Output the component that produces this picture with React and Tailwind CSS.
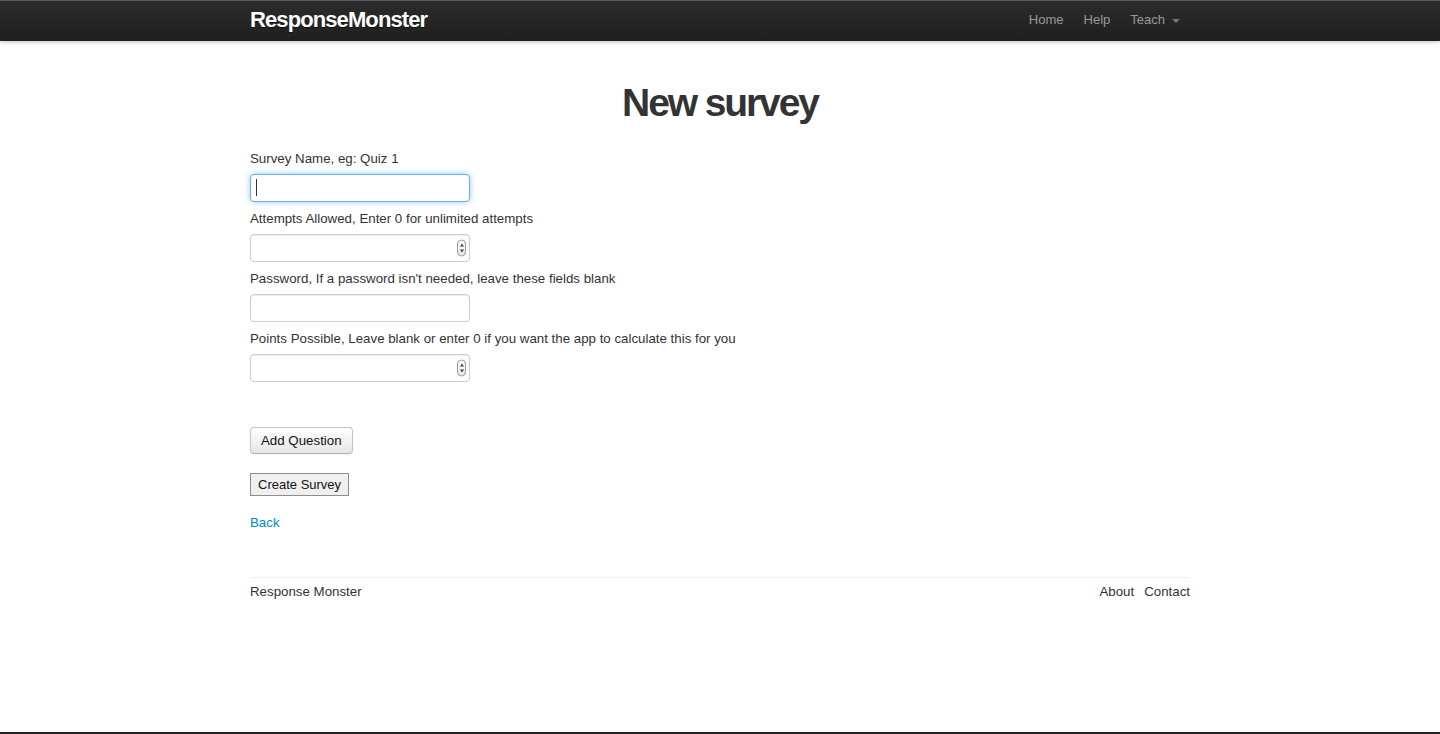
import { useState } from "react";

const font = { fontFamily: '"Liberation Sans", Arial, sans-serif' };

// mac-style spinner shown on number inputs
function Spinner() {
  return (
    <div className="absolute right-[4px] top-1/2 -translate-y-1/2 w-[9px] h-[17px] rounded-[5px] border border-[#9a9a9a] bg-gradient-to-b from-white to-[#e8e8e8] flex flex-col items-center justify-center gap-[3px]">
      <span className="block w-0 h-0 border-l-[2px] border-r-[2px] border-b-[3px] border-l-transparent border-r-transparent border-b-[#444]" />
      <span className="block w-0 h-0 border-l-[2px] border-r-[2px] border-t-[3px] border-l-transparent border-r-transparent border-t-[#444]" />
    </div>
  );
}

function Field({ label, focused, number }) {
  return (
    <div className="flex flex-col">
      <label className="text-[13.3px] leading-[20px] text-[#333] mb-[5px]">{label}</label>
      <div className="relative w-[220px] h-[28px]">
        <input
          type="text"
          className={
            focused
              ? "w-full h-full rounded-[4px] border border-[#66afe9] shadow-[0_0_6px_rgba(82,168,236,0.6)] outline-none px-[6px] text-[14px] bg-white"
              : "w-full h-full rounded-[4px] border border-[#ccc] shadow-[inset_0_1px_1px_rgba(0,0,0,0.075)] outline-none px-[6px] text-[14px] bg-white"
          }
        />
        {focused && <span className="absolute left-[6px] top-[5px] w-px h-[17px] bg-[#333]" />}
        {number && <Spinner />}
      </div>
    </div>
  );
}

export default function App() {
  const [fields] = useState([
    { label: "Survey Name, eg: Quiz 1", focused: true },
    { label: "Attempts Allowed, Enter 0 for unlimited attempts", number: true },
    { label: "Password, If a password isn't needed, leave these fields blank" },
    { label: "Points Possible, Leave blank or enter 0 if you want the app to calculate this for you", number: true },
  ]);

  return (
    <div className="h-[734px] bg-white flex flex-col border-b-2 border-[#222]" style={font}>
      {/* Navbar */}
      <div className="h-[41px] bg-gradient-to-b from-[#2c2c2c] to-[#1f1f1f] border-t border-[#5a5a5a] shadow-[0_1px_4px_rgba(0,0,0,0.25)] shrink-0">
        <div className="w-[940px] mx-auto h-full flex items-center justify-between pb-[3px]">
          <span className="text-white font-bold text-[22px] tracking-[-0.9px] [text-shadow:0_1px_0_rgba(0,0,0,0.6)]">
            ResponseMonster
          </span>
          <nav className="flex items-center text-[13px] text-[#999] mr-[10px]">
            <a className="px-[10px]">Home</a>
            <a className="px-[10px]">Help</a>
            <a className="pl-[10px] flex items-center gap-[7px]">
              Teach
              <span className="block w-0 h-0 border-l-[4px] border-r-[4px] border-t-[4px] border-l-transparent border-r-transparent border-t-[#777] mt-[2px]" />
            </a>
          </nav>
        </div>
      </div>

      {/* Main content */}
      <div className="w-[940px] mx-auto flex flex-col text-[#333]">
        <h1 className="text-center font-bold text-[39px] leading-[40px] tracking-[-2.1px] mt-[42px] mb-[26px]">
          New survey
        </h1>

        <div className="flex flex-col gap-[7px]">
          {fields.map((f) => (
            <Field key={f.label} label={f.label} focused={f.focused} number={f.number} />
          ))}
        </div>

        <div className="mt-[45px]">
          <button className="h-[27px] px-[10px] rounded-[4px] border border-[#c5c5c5] border-b-[#b3b3b3] bg-gradient-to-b from-white to-[#e6e6e6] shadow-[inset_0_1px_0_rgba(255,255,255,0.2),0_1px_2px_rgba(0,0,0,0.05)] text-[13.3px] text-[#111]">
            Add Question
          </button>
        </div>

        <div className="mt-[18px]">
          <button className="h-[23px] px-[7px] border border-[#8d8d8d] bg-[#efefef] text-[13px] text-[#111]">
            Create Survey
          </button>
        </div>

        <a className="mt-[17px] text-[13.3px] leading-[20px] text-[#0088cc] self-start">Back</a>

        {/* Footer */}
        <div className="mt-[44px] border-t border-[#eee] pt-[4px] flex justify-between text-[13.3px] leading-[20px] text-[#333]">
          <span>Response Monster</span>
          <div className="flex gap-[10px]">
            <a>About</a>
            <a>Contact</a>
          </div>
        </div>
      </div>
    </div>
  );
}
